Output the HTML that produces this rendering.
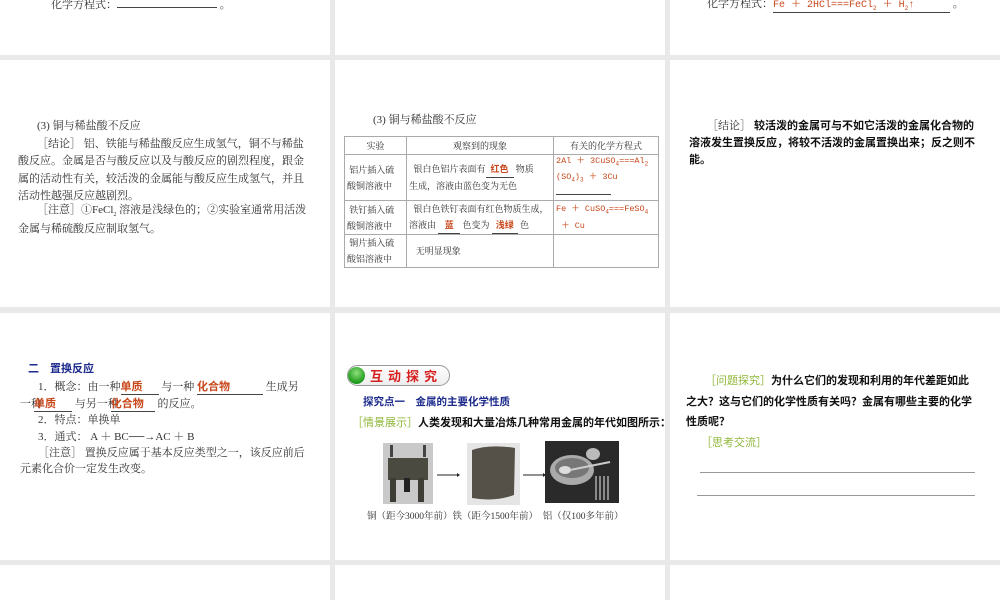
<!DOCTYPE html>
<html><head><meta charset="utf-8"><style>
*{margin:0;padding:0;box-sizing:border-box}
body{width:1000px;height:600px;background:#e9e9e9;position:relative;overflow:hidden;font-family:"Liberation Serif","Noto Serif CJK SC","Noto Sans CJK SC",serif;font-size:11px;color:#333}
.p{position:absolute;background:#fff}
.a{position:absolute;white-space:nowrap}
.r{color:#c8481c;font-family:"Liberation Sans","Noto Sans CJK SC",sans-serif;font-weight:bold}
.rm{color:#c8481c;font-family:"Liberation Mono","Noto Sans CJK SC",monospace}
.u{border-bottom:1px solid #444;display:inline-block}
.g{color:#8fb73a;font-family:"Liberation Sans","Noto Sans CJK SC",sans-serif;font-weight:normal}
.b{font-family:"Liberation Sans","Noto Sans CJK SC",sans-serif;font-weight:bold;color:#111}
table{border-collapse:collapse;position:absolute;left:344px;top:136px;width:315px;font-size:9px;table-layout:fixed}
td{border:1px solid #aaa;vertical-align:middle;line-height:16px;padding:0 2px;white-space:nowrap;overflow:hidden}
sub{font-size:6px}
</style></head><body>
<div class="p" style="left:0;top:0;width:330px;height:55px"></div>
<div class="p" style="left:335px;top:0;width:330px;height:55px"></div>
<div class="p" style="left:670px;top:0;width:330px;height:55px"></div>
<div class="p" style="left:0;top:60px;width:330px;height:247px"></div>
<div class="p" style="left:335px;top:60px;width:330px;height:247px"></div>
<div class="p" style="left:670px;top:60px;width:330px;height:247px"></div>
<div class="p" style="left:0;top:313px;width:330px;height:247px"></div>
<div class="p" style="left:335px;top:313px;width:330px;height:247px"></div>
<div class="p" style="left:670px;top:313px;width:330px;height:247px"></div>
<div class="p" style="left:0;top:565px;width:330px;height:35px"></div>
<div class="p" style="left:335px;top:565px;width:330px;height:35px"></div>
<div class="p" style="left:670px;top:565px;width:330px;height:35px"></div>

<!-- row1 -->
<div class="a" style="left:51px;top:-5px">化学方程式：<span class="u" style="width:100px;height:13px"></span> 。</div>
<div class="a" style="left:707px;top:-5px">化学方程式：<span class="u rm" style="width:177px;font-size:10px">Fe ＋ 2HCl===FeCl<sub>2</sub> ＋ H<sub>2</sub>↑</span> 。</div>

<!-- col1 row2 -->
<div class="a" style="left:37px;top:118px;line-height:17.5px">(3) 铜与稀盐酸不反应<br>［结论］ 铝、铁能与稀盐酸反应生成氢气，铜不与稀盐</div>
<div class="a" style="left:18px;top:153px;line-height:17.5px">酸反应。金属是否与酸反应以及与酸反应的剧烈程度，跟金<br>属的活动性有关，较活泼的金属能与酸反应生成氢气，并且<br>活动性越强反应越剧烈。</div>
<div class="a" style="left:37px;top:201px">［注意］①FeCl<sub>2</sub> 溶液是浅绿色的；②实验室通常用活泼</div>
<div class="a" style="left:18px;top:220px">金属与稀硫酸反应制取氢气。</div>

<!-- col2 row2 -->
<div class="a" style="left:373px;top:111px">(3) 铜与稀盐酸不反应</div>
<table>
<tr style="height:18px"><td style="width:62px;text-align:center">实验</td><td style="width:147px;text-align:center">观察到的现象</td><td style="text-align:center">有关的化学方程式</td></tr>
<tr style="height:46px"><td>&nbsp;铝片插入硫<br>酸铜溶液中</td><td>&nbsp;&nbsp;银白色铝片表面有<span class="u r" style="width:28px;text-align:center">红色</span> 物质<br>生成，溶液由蓝色变为无色</td><td class="rm" style="font-size:8.5px;line-height:13px">2Al ＋ 3CuSO<sub>4</sub>===Al<sub>2</sub><br>(SO<sub>4</sub>)<sub>3</sub> ＋ 3Cu<br><span class="u" style="width:55px"></span></td></tr>
<tr style="height:33px"><td>&nbsp;铁钉插入硫<br>酸铜溶液中</td><td>&nbsp;&nbsp;银白色铁钉表面有红色物质生成，<br>溶液由 <span class="u r" style="width:22px;text-align:center">蓝</span> 色变为 <span class="u r" style="width:26px;text-align:center">浅绿</span> 色</td><td class="rm" style="font-size:8.5px;line-height:14px">Fe ＋ CuSO<sub>4</sub>===FeSO<sub>4</sub><br>&nbsp;＋ Cu</td></tr>
<tr style="height:32px"><td>&nbsp;铜片插入硫<br>酸铝溶液中</td><td>&nbsp;&nbsp;&nbsp;无明显现象</td><td></td></tr>
</table>

<!-- col3 row2 -->
<div class="a b" style="left:707px;top:118px;line-height:17px"><span style="font-weight:normal;color:#333;font-family:'Liberation Serif','Noto Serif CJK SC',serif">［结论］</span> 较活泼的金属可与不如它活泼的金属化合物的</div>
<div class="a b" style="left:689px;top:135px;line-height:17px">溶液发生置换反应，将较不活泼的金属置换出来；反之则不<br>能。</div>

<!-- col1 row3 -->
<div class="a" style="left:28px;top:360px;color:#1c2a8c;font-weight:bold;font-family:'Liberation Sans','Noto Sans CJK SC',sans-serif">二　置换反应</div>
<div class="a" style="left:38px;top:378px">1．概念：由一种<span class="u r" style="width:38px">单质</span> 与一种 <span class="u r" style="width:66px">化合物</span> 生成另</div>
<div class="a" style="left:20px;top:395px">一种<span class="u r" style="width:38px;margin-left:-8px">单质</span> 与另一种<span class="u r" style="width:44px;margin-left:-8px">化合物</span> 的反应。</div>
<div class="a" style="left:38px;top:411px">2．特点：单换单</div>
<div class="a" style="left:38px;top:428px">3．通式： A ＋ BC──→AC ＋ B</div>
<div class="a" style="left:38px;top:444px">［注意］ 置换反应属于基本反应类型之一，该反应前后</div>
<div class="a" style="left:20px;top:460px">元素化合价一定发生改变。</div>

<!-- col2 row3 -->
<div class="a" style="left:347px;top:365px;width:103px;height:21px;border:1px solid #999;border-radius:11px;background:linear-gradient(#fff,#eee)"></div>
<div class="a" style="left:348px;top:367px;width:17px;height:17px;border-radius:50%;background:radial-gradient(circle at 50% 35%,#8ee07a,#1d9a1d 70%)"></div>
<div class="a" style="left:370px;top:366px;color:#d62020;font-weight:bold;font-size:13px;letter-spacing:5px;font-family:'Liberation Sans','Noto Sans CJK SC',sans-serif">互动探究</div>
<div class="a" style="left:363px;top:394px;color:#1c2a8c;font-weight:bold;font-size:10.5px;font-family:'Liberation Sans','Noto Sans CJK SC',sans-serif">探究点一　金属的主要化学性质</div>
<div class="a" style="left:352px;top:414px;font-size:11px"><span class="g">［情景展示］</span><span class="b">人类发现和大量冶炼几种常用金属的年代如图所示：</span></div>
<svg class="a" style="left:380px;top:440px" width="245" height="68">
<rect x="3" y="3" width="50" height="61" fill="#c9c9c9"/><rect x="8" y="18" width="40" height="22" fill="#4a4a40"/><rect x="10" y="38" width="6" height="24" fill="#3d3d35"/><rect x="24" y="38" width="6" height="14" fill="#222"/><rect x="38" y="38" width="6" height="24" fill="#3d3d35"/><rect x="10" y="5" width="3" height="12" fill="#444"/><rect x="43" y="5" width="3" height="12" fill="#444"/>
<line x1="57" y1="35" x2="77" y2="35" stroke="#222"/><path d="M77 33 L80 35 L77 37Z" fill="#222"/>
<rect x="87" y="3" width="53" height="62" fill="#e5e5e5"/><path d="M92 10 Q110 4 135 8 L134 55 Q115 62 92 58Z" fill="#555048"/>
<line x1="143" y1="35" x2="163" y2="35" stroke="#222"/><path d="M163 33 L166 35 L163 37Z" fill="#222"/>
<rect x="165" y="1" width="74" height="62" fill="#2a2a2a"/><ellipse cx="192" cy="30" rx="22" ry="15" fill="#aaa"/><ellipse cx="192" cy="28" rx="17" ry="10" fill="#777"/><ellipse cx="185" cy="30" rx="6" ry="4" fill="#ddd"/><ellipse cx="213" cy="14" rx="7" ry="6" fill="#bbb"/><line x1="190" y1="30" x2="230" y2="22" stroke="#ccc" stroke-width="2"/><path d="M216 36 V60 M220 36 V60 M224 36 V60 M228 36 V60" stroke="#aaa" stroke-width="1.5"/>
</svg>
<div class="a" style="left:367px;top:508px;font-size:9.5px">铜（距今3000年前）铁（距今1500年前）　铝（仅100多年前）</div>

<!-- col3 row3 -->
<div class="a b" style="left:705px;top:372px"><span class="g">［问题探究］</span>为什么它们的发现和利用的年代差距如此</div>
<div class="a b" style="left:686px;top:392px;line-height:20px">之大？这与它们的化学性质有关吗？金属有哪些主要的化学<br>性质呢？</div>
<div class="a g" style="left:701px;top:434px">［思考交流］</div>
<div class="a" style="left:700px;top:472px;width:275px;border-top:1px solid #999"></div>
<div class="a" style="left:697px;top:495px;width:278px;border-top:1px solid #999"></div>
</body></html>
